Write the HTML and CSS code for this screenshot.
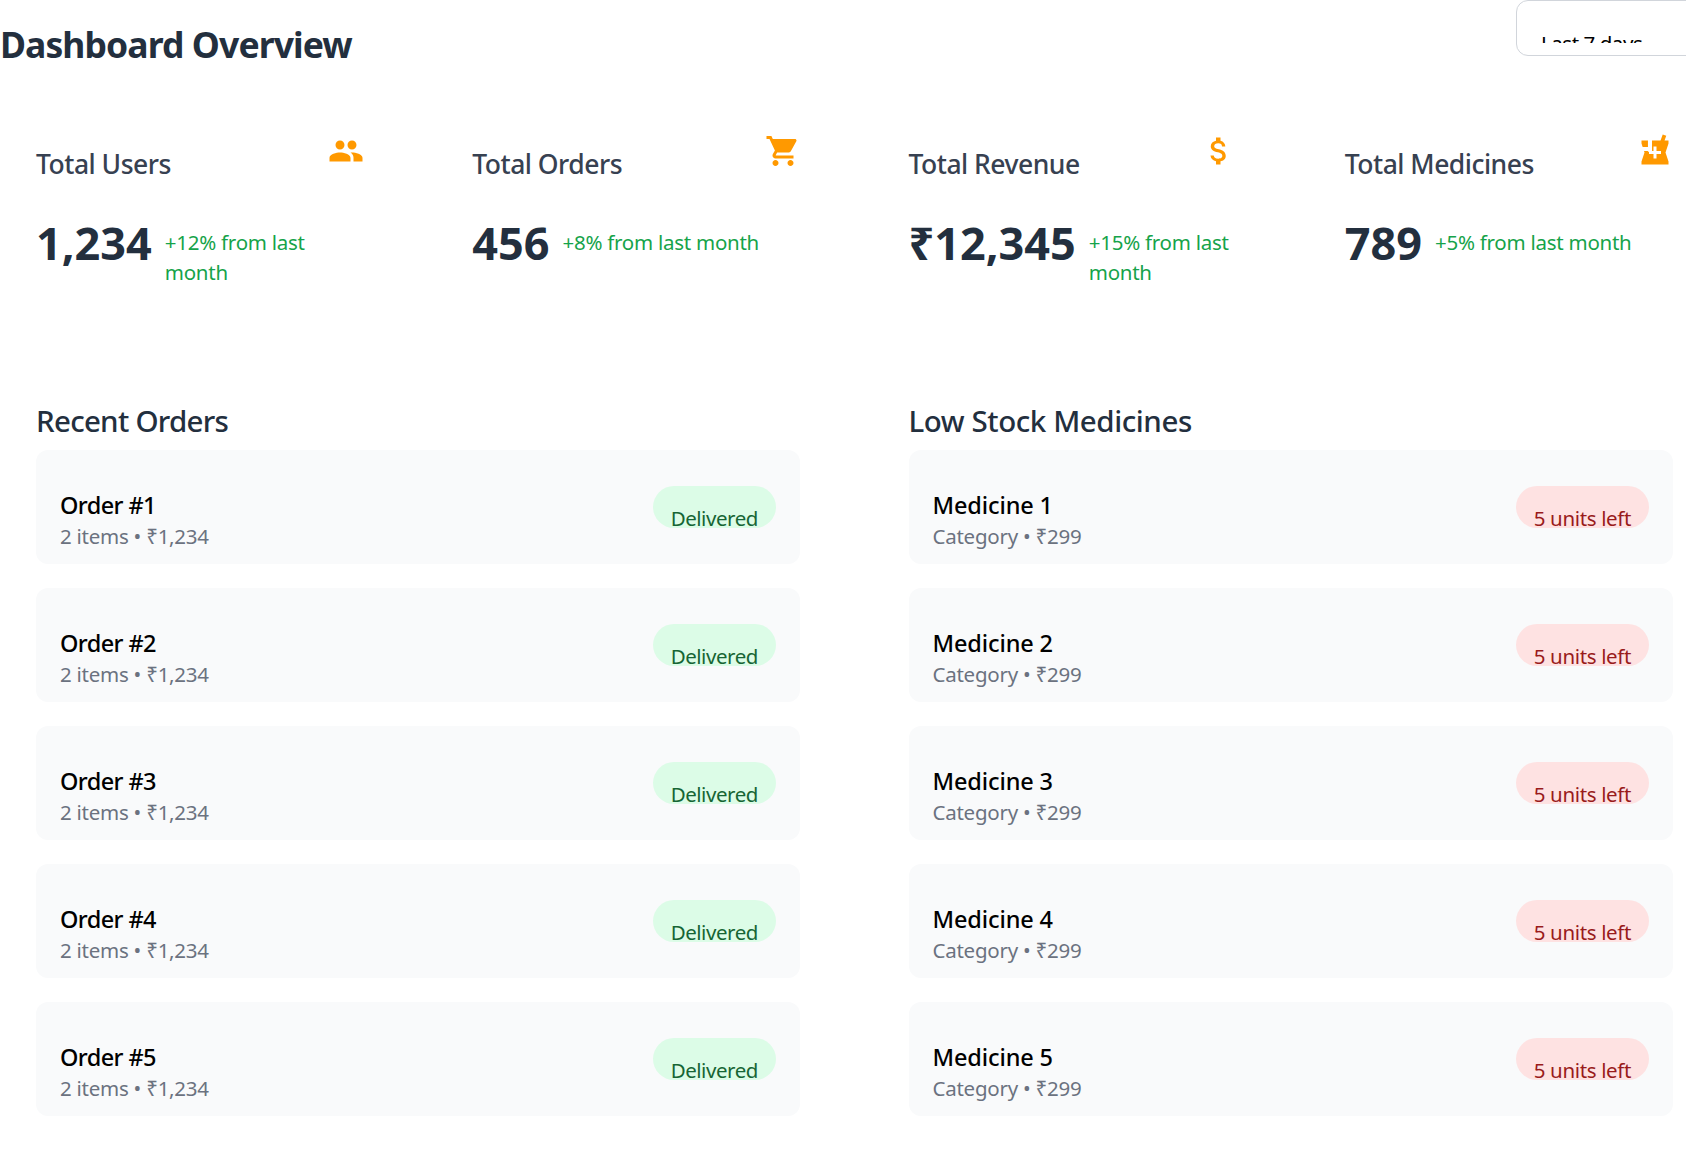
FILE: index.html
```html
<!DOCTYPE html>
<html lang="en">
<head>
<meta charset="utf-8">
<title>Dashboard Overview</title>
<link rel="stylesheet" href="styles.css">
</head>
<body>
<main class="dashboard">
  <header class="page-header">
    <h1 class="page-title">Dashboard Overview</h1>
    <div class="range"><div class="range-text"><span>Last 7 days</span></div></div>
  </header>

  <section class="stats">
    <article class="stat">
      <div class="stat-head"><h3 class="stat-title">Total Users</h3>
        <svg class="icon" viewBox="0 0 24 24"><path d="M16 11c1.66 0 2.99-1.34 2.99-3S17.66 5 16 5c-1.66 0-3 1.34-3 3s1.34 3 3 3zm-8 0c1.66 0 2.99-1.34 2.99-3S9.66 5 8 5C6.34 5 5 6.34 5 8s1.34 3 3 3zm0 2c-2.33 0-7 1.17-7 3.5V19h14v-2.500c0-2.330-4.670-3.500-7-3.500zm8 0c-.29 0-.62.02-.97.05 1.160.84 1.970 1.970 1.970 3.450V19h6v-2.500c0-2.330-4.670-3.500-7-3.500z"/></svg>
      </div>
      <div class="stat-body"><span class="value">1,234</span><span class="change">+12% from last month</span></div>
    </article>
    <article class="stat">
      <div class="stat-head"><h3 class="stat-title">Total Orders</h3>
        <svg class="icon" viewBox="0 0 24 24"><path d="M7 18c-1.100 0-1.990.9-1.990 2S5.900 22 7 22s2-.9 2-2-.9-2-2-2zM1 2v2h2l3.600 7.590-1.350 2.450c-.16.28-.25.61-.25.96 0 1.100.9 2 2 2h12v-2H7.420c-.14 0-.25-.11-.25-.25l.03-.12.9-1.630h7.450c.75 0 1.410-.41 1.750-1.030l3.580-6.490c.08-.14.12-.31.12-.48 0-.55-.45-1-1-1H5.210l-.94-2H1zm16 16c-1.100 0-1.990.9-1.990 2s.89 2 1.990 2 2-.9 2-2-.9-2-2-2z"/></svg>
      </div>
      <div class="stat-body"><span class="value">456</span><span class="change">+8% from last month</span></div>
    </article>
    <article class="stat">
      <div class="stat-head"><h3 class="stat-title">Total Revenue</h3>
        <svg class="icon" viewBox="0 0 24 24"><path d="M11.800 10.900c-2.270-.59-3-1.200-3-2.150 0-1.090 1.010-1.850 2.700-1.850 1.780 0 2.440.85 2.500 2.100h2.210c-.07-1.720-1.120-3.300-3.210-3.810V3h-3v2.160c-1.940.42-3.500 1.680-3.500 3.610 0 2.310 1.910 3.460 4.700 4.130 2.500.6 3 1.480 3 2.410 0 .69-.49 1.790-2.700 1.790-2.060 0-2.870-.92-2.980-2.100h-2.200c.12 2.190 1.760 3.420 3.680 3.830V21h3v-2.150c1.950-.37 3.500-1.500 3.500-3.550 0-2.840-2.430-3.810-4.700-4.400z"/></svg>
      </div>
      <div class="stat-body"><span class="value">₹12,345</span><span class="change">+15% from last month</span></div>
    </article>
    <article class="stat">
      <div class="stat-head"><h3 class="stat-title">Total Medicines</h3>
        <svg class="icon" viewBox="0 0 24 24"><path d="M21 5h-2.640l1.140-3.140L17.150 1l-1.460 4H3v2l2 6-2 6v2h18v-2l-2-6 2-6V5zm-5 9h-3v3h-2v-3H8v-2h3V9h2v3h3v2z"/><path class="icon-cut" d="M7.300 4.300H10v8.200H7.300V12H3V9.400h4.300z"/></svg>
      </div>
      <div class="stat-body"><span class="value">789</span><span class="change">+5% from last month</span></div>
    </article>
  </section>

  <section class="panels">
    <article class="panel orders">
      <h2 class="panel-title">Recent Orders</h2>
      <ul class="list">
        <li class="row"><div class="info"><p class="name">Order #1</p><p class="meta">2 items • ₹1,234</p></div><span class="badge ok">Delivered</span></li>
        <li class="row"><div class="info"><p class="name">Order #2</p><p class="meta">2 items • ₹1,234</p></div><span class="badge ok">Delivered</span></li>
        <li class="row"><div class="info"><p class="name">Order #3</p><p class="meta">2 items • ₹1,234</p></div><span class="badge ok">Delivered</span></li>
        <li class="row"><div class="info"><p class="name">Order #4</p><p class="meta">2 items • ₹1,234</p></div><span class="badge ok">Delivered</span></li>
        <li class="row"><div class="info"><p class="name">Order #5</p><p class="meta">2 items • ₹1,234</p></div><span class="badge ok">Delivered</span></li>
      </ul>
    </article>
    <article class="panel stock">
      <h2 class="panel-title">Low Stock Medicines</h2>
      <ul class="list">
        <li class="row"><div class="info"><p class="name">Medicine 1</p><p class="meta">Category • ₹299</p></div><span class="badge low">5 units left</span></li>
        <li class="row"><div class="info"><p class="name">Medicine 2</p><p class="meta">Category • ₹299</p></div><span class="badge low">5 units left</span></li>
        <li class="row"><div class="info"><p class="name">Medicine 3</p><p class="meta">Category • ₹299</p></div><span class="badge low">5 units left</span></li>
        <li class="row"><div class="info"><p class="name">Medicine 4</p><p class="meta">Category • ₹299</p></div><span class="badge low">5 units left</span></li>
        <li class="row"><div class="info"><p class="name">Medicine 5</p><p class="meta">Category • ₹299</p></div><span class="badge low">5 units left</span></li>
      </ul>
    </article>
  </section>
</main>
</body>
</html>
```
FILE: styles.css
```css
* { box-sizing: border-box; margin: 0; padding: 0; }
html, body { height: 100%; overflow: hidden; }
body { background: #fff; color: #000; font-family: "Noto Sans", "Open Sans", sans-serif; }
.dashboard { width: 1709px; }

.page-header { display: flex; justify-content: space-between; align-items: flex-start; height: 97px; }
.page-title { padding-top: 20px; font-size: 35.500px; line-height: 48px; font-weight: 700; color: #232f3e; letter-spacing: -0.9px; white-space: nowrap; }
.range { width: 193px; height: 56px; border: 1px solid #d1d5db; border-radius: 12px; padding: 12px 24px; }
.range-text { height: 30px; overflow: hidden; padding-top: 15px; font-size: 20.500px; line-height: 30px; letter-spacing: -0.45px; white-space: nowrap; }

.stats { display: grid; grid-template-columns: repeat(4, 1fr); gap: 36px; }
.stat { padding: 36px; height: 273px; }
.stat-head { display: flex; justify-content: space-between; align-items: flex-start; height: 72px; }
.stat-title { padding-top: 11px; font-size: 26.500px; line-height: 40px; font-weight: 500; color: #374151; letter-spacing: -0.5px; white-space: nowrap; }
.icon { width: 36px; height: 36px; fill: #ff9900; flex: none; }
.icon-cut { fill: #fff; }
.stat-body { display: flex; align-items: flex-start; gap: 13px; }
.value { padding-top: 12px; font-size: 45px; line-height: 52px; font-weight: 700; color: #232f3e; }
.change { padding-top: 22px; font-size: 20.500px; line-height: 30px; letter-spacing: -0.26px; color: #16a34a; }

.panels { display: grid; grid-template-columns: 1fr 1fr; gap: 36px; }
.panel { padding: 30px 36px 36px; }
.panel-title { height: 50px; font-size: 29.500px; line-height: 42px; font-weight: 500; color: #232f3e; white-space: nowrap; }
.orders { padding-right: 36.600px; }
.orders .panel-title { letter-spacing: -0.72px; }
.stock .panel-title { letter-spacing: -0.42px; }
.list { list-style: none; display: grid; gap: 24px; }
.row { display: flex; justify-content: space-between; align-items: center; height: 114px; padding: 0 24px; border-radius: 12px; background: #f9fafb; }
.info { padding-top: 23px; }
.name { padding-top: 2px; font-size: 23.500px; line-height: 34px; font-weight: 500; }
.orders .name { letter-spacing: -0.6px; }
.stock .name { letter-spacing: -0.12px; }
.meta { margin-top: -1px; font-size: 20.500px; line-height: 30px; letter-spacing: -0.25px; color: #6b7280; }
.badge { height: 42px; padding: 17px 18px 0; border-radius: 21px; overflow: hidden; font-size: 20.500px; line-height: 30px; white-space: nowrap; }
.ok { background: #dcfce7; color: #166534; letter-spacing: -0.45px; }
.low { background: #fee2e2; color: #991b1b; letter-spacing: -0.36px; }
```
